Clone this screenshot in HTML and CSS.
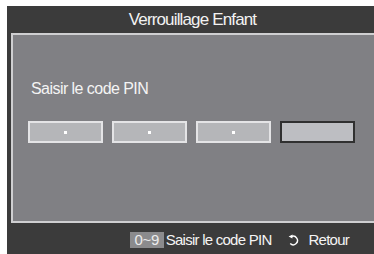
FILE: index.html
```html
<!DOCTYPE html>
<html lang="fr">
<head>
<meta charset="utf-8">
<link rel="stylesheet" href="styles.css">
</head>
<body>
<div class="screen">
  <div class="title">Verrouillage Enfant</div>
  <div class="panel">
    <div class="prompt">Saisir le code PIN</div>
    <div class="pins">
      <div class="pin filled"><span class="dot"></span></div>
      <div class="pin filled"><span class="dot"></span></div>
      <div class="pin filled"><span class="dot"></span></div>
      <div class="pin active"></div>
    </div>
  </div>
  <div class="footer">
    <span class="key">0~9</span>
    <span class="label">Saisir le code PIN</span>
    <svg class="ret" width="11" height="12" viewBox="0 0 11 12">
      <path d="M3.2 2.6 A4.3 4.3 0 1 1 2.2 9.6" fill="none" stroke="#fff" stroke-width="1.4"/>
      <path d="M0.6 2.6 L4.6 0.4 L4.4 4.6 Z" fill="#fff"/>
    </svg>
    <span class="label back">Retour</span>
  </div>
</div>
</body>
</html>
```
FILE: styles.css
```css
html, body {
  margin: 0;
  padding: 0;
  background: #ffffff;
}

.screen {
  margin: 6px 0 0 7px;
  width: 367px;
  height: 248px;
  background: #3b3b3b;
  overflow: hidden;
  display: flex;
  flex-direction: column;
  font-family: "Liberation Sans", Arial, sans-serif;
  color: #ffffff;
}

.title {
  height: 27px;
  flex: none;
  display: flex;
  align-items: center;
  justify-content: center;
  padding-left: 4px;
  font-size: 17px;
  letter-spacing: -0.85px;
  color: #f2f2f2;
}

.panel {
  flex: none;
  margin-left: 4px;
  width: 380px;
  height: 190px;
  box-sizing: border-box;
  background: #808084;
  border: 2px solid #cfcfd1;
  border-right: none;
  padding: 45px 0 0 18px;
}

.prompt {
  font-size: 16px;
  letter-spacing: -0.55px;
  color: #f4f4f4;
  line-height: 18px;
}

.pins {
  display: flex;
  gap: 9px;
  margin: 23px 0 0 -3px;
}

.pin {
  width: 75px;
  height: 22px;
  box-sizing: border-box;
  display: flex;
  align-items: center;
  justify-content: center;
}

.pin.filled {
  background: #b5b6b9;
  border: 2px solid #e4e4e6;
}

.pin.active {
  background: #bdbec2;
  border: 2px solid #303030;
}

.dot {
  width: 3px;
  height: 3px;
  background: #ffffff;
}

.footer {
  flex: 1;
  display: flex;
  align-items: flex-start;
  justify-content: flex-end;
  padding: 9px 25px 0 0;
  font-size: 15px;
}

.key {
  width: 34px;
  height: 16px;
  background: #8b8b8d;
  color: #ececec;
  display: flex;
  align-items: center;
  justify-content: center;
  line-height: 16px;
  letter-spacing: -0.3px;
}

.label {
  margin-left: 2px;
  line-height: 16px;
  letter-spacing: -0.75px;
  color: #f4f4f4;
}

.ret {
  margin: 2px 0 0 17px;
}

.label.back {
  margin-left: 9px;
}
```
